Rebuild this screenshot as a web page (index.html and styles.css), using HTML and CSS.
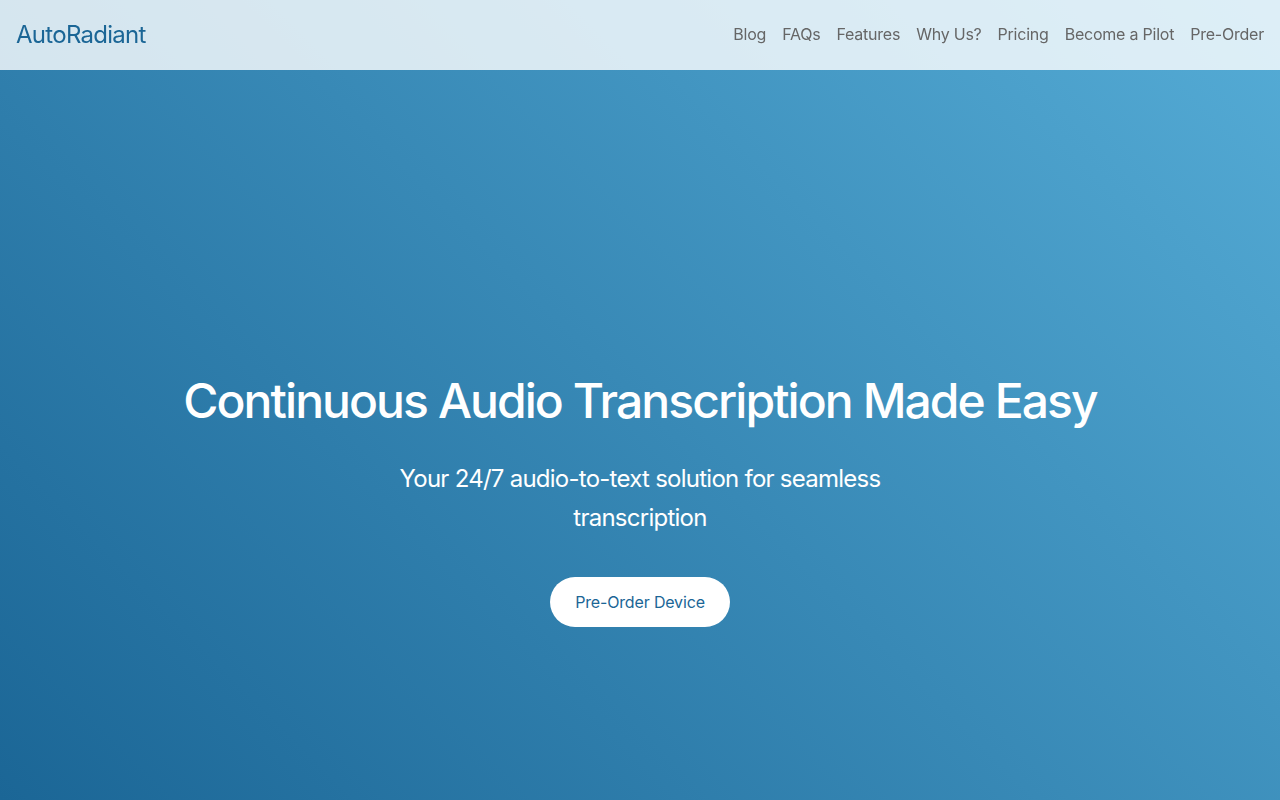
FILE: index.html
```html
<!DOCTYPE html>
<html lang="en">
<head>
<meta charset="utf-8">
<title>AutoRadiant</title>
<link rel="stylesheet" href="styles.css">
</head>
<body>
<header class="site-header">
  <a class="logo" href="#">AutoRadiant</a>
  <nav class="nav">
    <a href="#">Blog</a>
    <a href="#">FAQs</a>
    <a href="#">Features</a>
    <a href="#">Why Us?</a>
    <a href="#">Pricing</a>
    <a href="#">Become a Pilot</a>
    <a href="#">Pre-Order</a>
  </nav>
</header>
<main class="hero">
  <h1 class="hero-title">Continuous Audio Transcription Made Easy</h1>
  <p class="hero-sub">Your 24/7 audio-to-text solution for seamless transcription</p>
  <a class="hero-btn" href="#">Pre-Order Device</a>
</main>
</body>
</html>
```

FILE: styles.css
```css
* { box-sizing: border-box; }
html, body { margin: 0; padding: 0; }
body {
  font-family: Inter, "Noto Sans", sans-serif;
  background: linear-gradient(45deg, #1b6696, #55acd6);
  min-height: 100vh;
  overflow: hidden;
}
.site-header {
  position: fixed;
  top: 0;
  left: 0;
  right: 0;
  height: 70px;
  display: flex;
  align-items: center;
  justify-content: space-between;
  padding: 0 16px 2px;
  background: rgba(255, 255, 255, 0.8);
  z-index: 10;
}
.logo {
  font-size: 24px;
  letter-spacing: -0.03em;
  color: #1b6696;
  text-decoration: none;
}
.nav {
  display: flex;
  gap: 16px;
}
.nav a {
  font-size: 16px;
  letter-spacing: -0.014em;
  color: #666666;
  text-decoration: none;
}
.hero {
  min-height: 100vh;
  display: flex;
  flex-direction: column;
  align-items: center;
  justify-content: center;
  padding-top: 198px;
  text-align: center;
  color: #ffffff;
}
.hero-title {
  margin: 0 0 30px;
  font-size: 48px;
  font-weight: 500;
  letter-spacing: -0.04em;
  line-height: normal;
}
.hero-sub {
  margin: 0 0 40px;
  max-width: 600px;
  font-size: 24px;
  letter-spacing: -0.031em;
  line-height: 1.6;
}
.hero-btn {
  display: inline-block;
  padding: 15px 25px;
  line-height: 20px;
  font-size: 16px;
  letter-spacing: -0.01em;
  color: #1b6696;
  background: #ffffff;
  border-radius: 25px;
  text-decoration: none;
}
```
